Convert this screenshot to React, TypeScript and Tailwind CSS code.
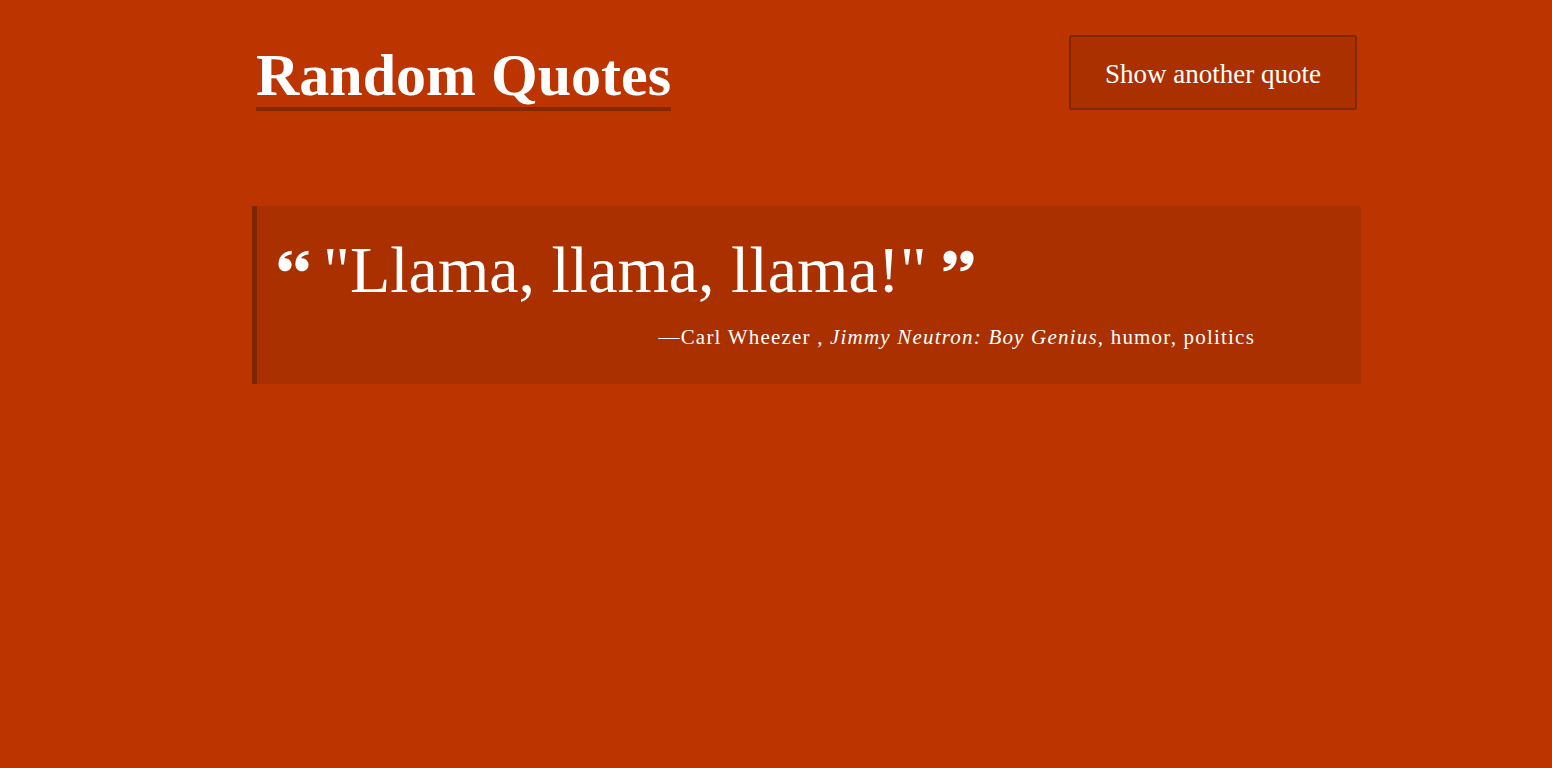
import React from 'react';
import { ImQuotesLeft, ImQuotesRight } from 'react-icons/im';

export default function App() {
  return (
    <div className="min-h-screen w-full bg-[#bc3500] text-white" style={{ fontFamily: '"Liberation Serif", "DejaVu Serif", serif' }}>
      <div className="ml-[252px] w-[1109px] pt-[35px]">
        <header className="flex items-start justify-between px-[4px]">
          <h1 className="mt-[8px] border-b-[4px] border-[#852800] text-[60px] font-bold leading-[64px]">
            Random Quotes
          </h1>
          <button className="h-[75px] w-[288px] rounded-[3px] border-2 border-[#7f2700] bg-[#aa3000] pt-[4px] text-[27px] text-white">
            Show another quote
          </button>
        </header>

        <blockquote className="mt-[95px] h-[178px] rounded-r-[3px] border-l-[5px] border-[#7d2600] bg-[#aa3000] pl-[21px] pt-[28px]">
          <div className="flex items-start gap-[14px]">
            <ImQuotesLeft className="mt-[11px] h-[30px] w-[31px] shrink-0" />
            <p className="text-[66px] leading-[72px]">"Llama, llama, llama!"</p>
            <ImQuotesRight className="mt-[11px] ml-[2px] h-[30px] w-[31px] shrink-0" />
          </div>
          <p className="mt-[17px] pr-[106px] text-right text-[21px] leading-[28px] tracking-[1.2px]">
            —Carl Wheezer , <cite className="italic">Jimmy Neutron: Boy Genius</cite>, humor, politics
          </p>
        </blockquote>
      </div>
    </div>
  );
}
